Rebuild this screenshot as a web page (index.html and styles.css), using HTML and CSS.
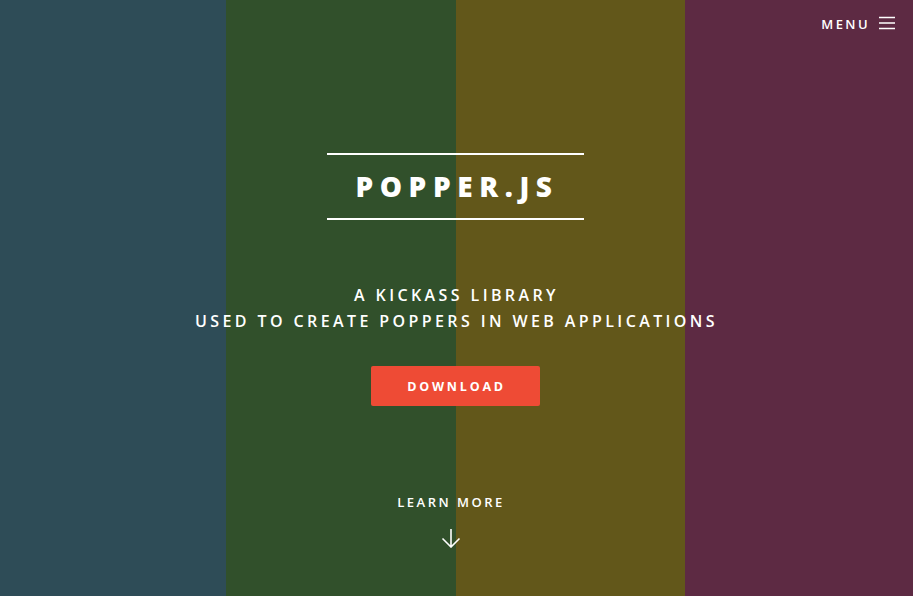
FILE: index.html
```html
<!DOCTYPE html>
<html>
<head>
<meta charset="utf-8">
<title>Popper.js</title>
<link rel="stylesheet" href="styles.css">
</head>
<body>
<div class="page">
  <header class="topbar">
    <a class="menu" href="#">
      <span class="menu-label">MENU</span>
      <svg class="menu-icon" width="16" height="14" viewBox="0 0 16 14"><path d="M0 1.5H16M0 7H16M0 12.5H16" stroke="#fff" stroke-width="1.6"/></svg>
    </a>
  </header>
  <main class="hero">
    <h1 class="title">POPPER.JS</h1>
    <p class="tagline">A KICKASS LIBRARY<br>USED TO CREATE POPPERS IN WEB APPLICATIONS</p>
    <a class="download" href="#">DOWNLOAD</a>
    <a class="learn" href="#">
      <span class="learn-label">LEARN MORE</span>
      <svg class="arrow" width="20" height="20" viewBox="0 0 20 20"><path d="M10 1V19M1.5 10.5L10 19L18.5 10.5" stroke="#fff" stroke-width="1.6" fill="none"/></svg>
    </a>
  </main>
</div>
</body>
</html>
```
FILE: styles.css
```css
html, body {
  margin: 0;
  padding: 0;
  height: 100%;
}
body {
  font-family: "Open Sans", "Liberation Sans", sans-serif;
  color: #fff;
  background: linear-gradient(to right,
    #2e4c57 0, #2e4c57 226px,
    #31502b 226px, #31502b 456px,
    #62571a 456px, #62571a 685px,
    #5d2a43 685px, #5d2a43 100%);
  overflow: hidden;
}
a { color: #fff; text-decoration: none; }
.page {
  height: 596px;
  display: flex;
  flex-direction: column;
}
.topbar {
  display: flex;
  justify-content: flex-end;
  padding: 14px 18px 0 0;
  height: 20px;
}
.menu {
  display: flex;
  align-items: center;
  gap: 9px;
}
.menu-label {
  font-size: 13px;
  font-weight: 600;
  letter-spacing: 2.4px;
  line-height: 20px;
}
.menu-icon { display: block; margin-top: -2px; }
.hero {
  display: flex;
  flex-direction: column;
  align-items: center;
  padding-top: 119px;
}
.title {
  margin: 0 0 0 -2px;
  width: 257px;
  box-sizing: border-box;
  border-top: 2px solid #fff;
  border-bottom: 2px solid #fff;
  text-align: center;
  font-size: 28px;
  font-weight: 800;
  letter-spacing: 6.6px;
  line-height: 63px;
  padding-left: 3px;
}
.tagline {
  margin: 62px 0 0;
  text-align: center;
  font-size: 16px;
  font-weight: 600;
  letter-spacing: 3.4px;
  line-height: 26px;
}
.download {
  margin: 32px 0 0 -2px;
  width: 169px;
  height: 40px;
  background: #ee4b35;
  border-radius: 2px;
  display: flex;
  align-items: center;
  justify-content: center;
  font-size: 12.5px;
  font-weight: 700;
  letter-spacing: 2.8px;
  padding-left: 2px;
  box-sizing: border-box;
}
.learn {
  margin-top: 87px;
  display: flex;
  flex-direction: column;
  align-items: center;
  margin-left: -11px;
}
.learn-label {
  font-size: 13px;
  font-weight: 600;
  letter-spacing: 2.5px;
  line-height: 18px;
}
.arrow { margin-top: 17px; display: block; }
```
